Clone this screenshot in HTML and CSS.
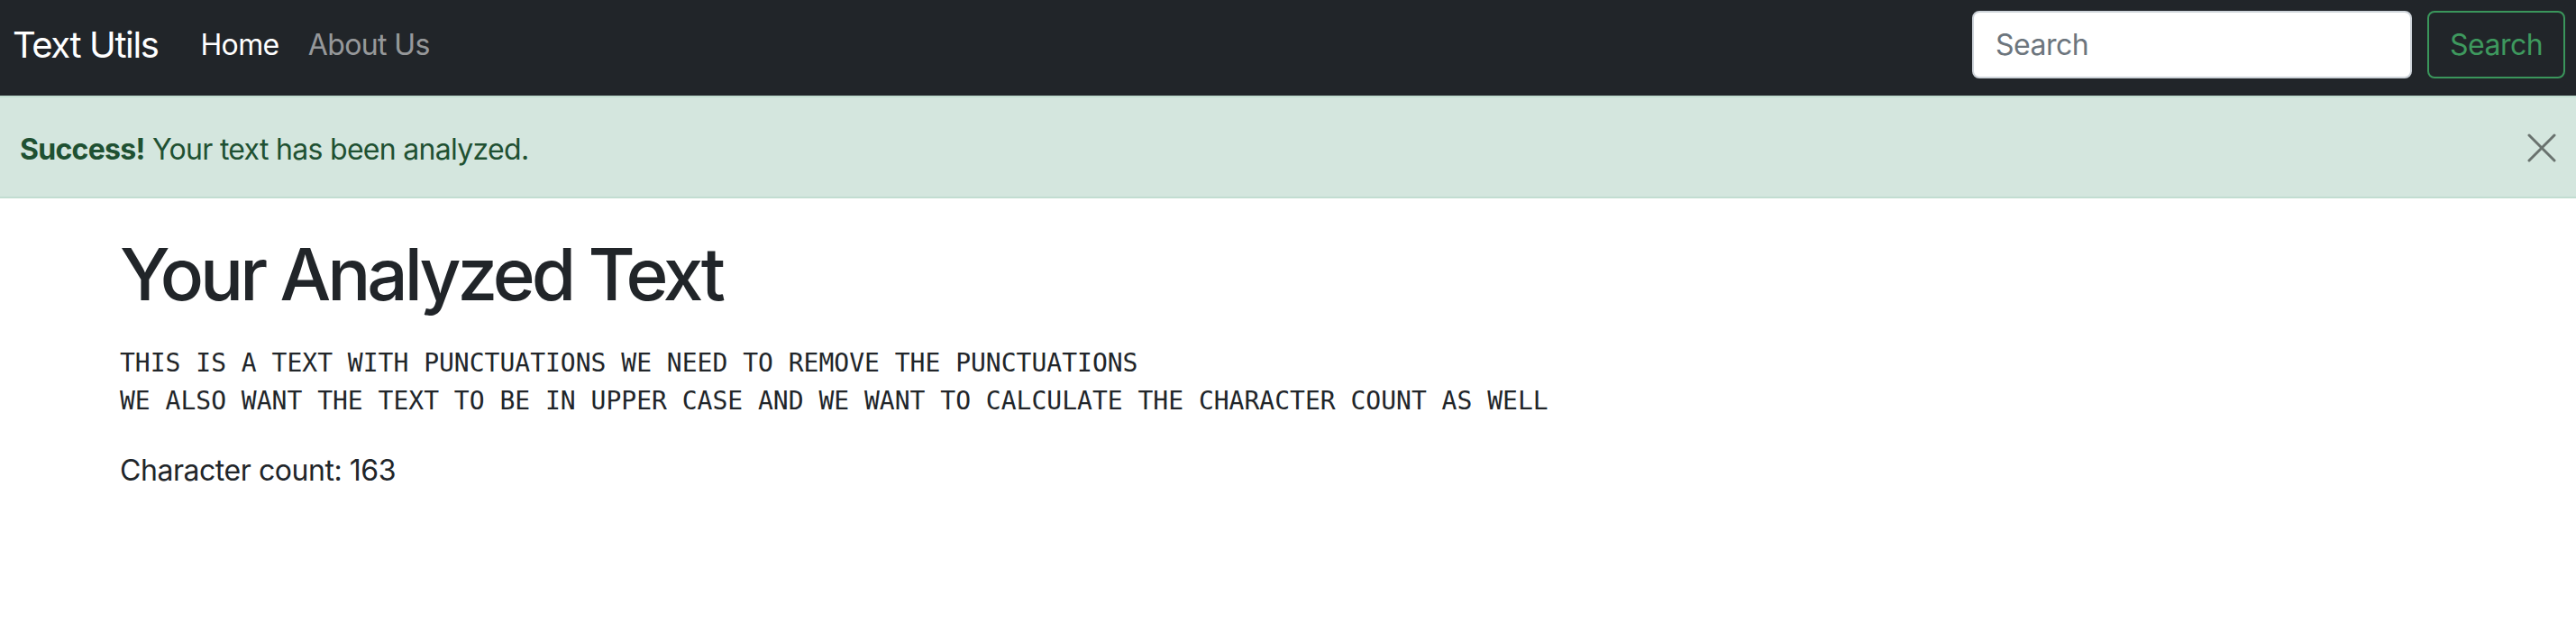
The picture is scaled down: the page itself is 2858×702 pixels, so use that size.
FILE: index.html
```html
<!DOCTYPE html>
<html lang="en">
<head>
<meta charset="utf-8">
<title>Text Utils</title>
<link rel="stylesheet" href="styles.css">
</head>
<body>
<nav class="navbar">
  <a class="brand" href="#">Text Utils</a>
  <ul class="nav">
    <li><a class="nav-link active" href="#">Home</a></li>
    <li><a class="nav-link" href="#">About Us</a></li>
  </ul>
  <form class="search">
    <input class="search-input" type="search" placeholder="Search">
    <button class="search-btn" type="button">Search</button>
  </form>
</nav>
<div class="alert">
  <span><strong>Success!</strong> Your text has been analyzed.</span>
  <button class="close" type="button" aria-label="Close">
    <svg width="32" height="32" viewBox="0 0 32 32"><path d="M2 2 L30 30 M30 2 L2 30" stroke="#000" stroke-width="3" stroke-linecap="round" fill="none"/></svg>
  </button>
</div>
<main class="container">
  <h1 class="title">Your Analyzed Text</h1>
  <pre class="result">THIS IS A TEXT WITH PUNCTUATIONS WE NEED TO REMOVE THE PUNCTUATIONS
WE ALSO WANT THE TEXT TO BE IN UPPER CASE AND WE WANT TO CALCULATE THE CHARACTER COUNT AS WELL</pre>
  <p class="count">Character count: 163</p>
</main>
</body>
</html>
```
FILE: styles.css
```css
* { box-sizing: border-box; }
body {
  margin: 0;
  font-family: Inter, "Noto Sans", sans-serif;
  color: #212529;
  background: #fff;
}
.navbar {
  display: flex;
  align-items: center;
  background: #212529;
  padding: 12px 12px 19px 14px;
  height: 106px;
}
.brand {
  font-size: 40px;
  line-height: 60px;
  color: #fff;
  text-decoration: none;
  margin-right: 31px;
  letter-spacing: -1.4px;
}
.nav {
  display: flex;
  list-style: none;
  margin: 0;
  padding: 0;
  flex: 1;
}
.nav-link {
  display: block;
  padding: 0 16px;
  font-size: 32px;
  line-height: 48px;
  color: rgba(255,255,255,0.55);
  text-decoration: none;
  letter-spacing: -0.6px;
}
.nav-link.active { color: #fff; }
.search {
  display: flex;
  gap: 17px;
  margin: 0;
}
.search-input {
  width: 488px;
  height: 75px;
  border: 2px solid #ced4da;
  border-radius: 8px;
  padding: 0 24px;
  font-family: inherit;
  font-size: 32px;
  color: #212529;
  background: #fff;
  outline: none;
  letter-spacing: -0.5px;
}
.search-input::placeholder { color: #6c757d; }
.search-btn {
  width: 153px;
  height: 75px;
  border: 2px solid #3a965b;
  border-radius: 8px;
  background: transparent;
  color: #3e995e;
  font-family: inherit;
  font-size: 32px;
  padding: 0;
  letter-spacing: -0.5px;
}
.alert {
  display: flex;
  align-items: center;
  justify-content: space-between;
  background: #d4e6de;
  border-top: 2px solid #c2ddd1;
  border-bottom: 2px solid #c2ddd1;
  color: #1f5132;
  font-size: 32px;
  line-height: 48px;
  padding: 34px 22px 28px 22px;
  height: 114px;
  letter-spacing: -0.7px;
}
.alert strong { font-weight: 700; }
.close {
  border: 0;
  background: transparent;
  padding: 0;
  opacity: 0.5;
  display: flex;
  margin-top: -4px;
}
.container {
  max-width: 2640px;
  margin: 0 auto;
  padding: 36px 24px 0;
}
.title {
  font-size: 80px;
  line-height: 96px;
  font-weight: 500;
  margin: 0 0 30px;
  letter-spacing: -4px;
}
.result {
  font-family: "DejaVu Sans Mono", monospace;
  font-size: 28px;
  line-height: 42px;
  margin: 0 0 32px;
  color: #212529;
}
.count {
  font-size: 32px;
  line-height: 48px;
  margin: 0;
  letter-spacing: -0.45px;
}
```
